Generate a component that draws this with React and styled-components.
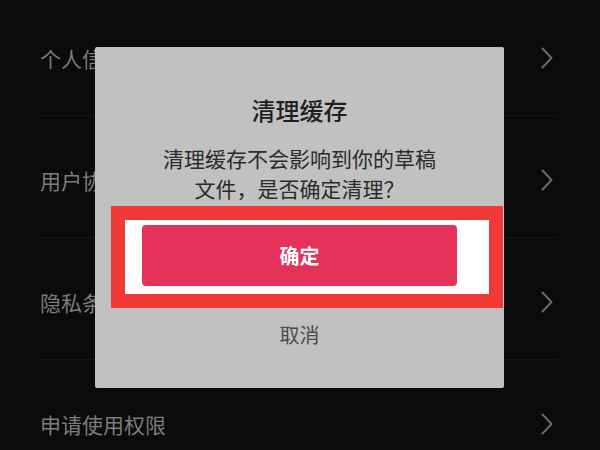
import React from "react";
import styled, { createGlobalStyle } from "styled-components";

const GlobalStyle = createGlobalStyle`
  html, body {
    margin: 0;
    padding: 0;
    background: #0b0b0b;
  }
  * {
    box-sizing: border-box;
  }
`;

const Screen = styled.div`
  position: relative;
  width: 600px;
  height: 450px;
  overflow: hidden;
  background: #0b0b0b;
  font-family: "Noto Sans CJK SC", "Noto Sans", sans-serif;
`;

const List = styled.div`
  display: flex;
  flex-direction: column;
`;

const Row = styled.div`
  display: flex;
  align-items: center;
  justify-content: space-between;
  height: ${(p) => (p.$first ? "115px" : "121px")};
  padding: ${(p) => (p.$first ? "0" : "7px")} 47px 0 40px;
`;

const Divider = styled.div`
  height: 1px;
  margin: 0 42px 0 40px;
  background: #161616;
`;

const Label = styled.span`
  font-size: 21px;
  line-height: 30px;
  color: #7c7c7c;
`;

const Chevron = () => (
  <svg width="12" height="22" viewBox="0 0 12 22" fill="none">
    <polyline
      points="1.5,1.5 10.5,11 1.5,20.5"
      stroke="#6b6b6b"
      strokeWidth="2"
      strokeLinecap="round"
      strokeLinejoin="round"
    />
  </svg>
);

const Dialog = styled.div`
  position: absolute;
  left: 95px;
  top: 47px;
  width: 409px;
  height: 341px;
  display: flex;
  flex-direction: column;
  align-items: center;
  padding-top: 48px;
  background: #c1c1c1;
  border-radius: 2px;
`;

const Title = styled.div`
  font-size: 24px;
  line-height: 30px;
  font-weight: 500;
  color: #1f1f1f;
`;

const Message = styled.p`
  margin: 18px 0 3px;
  font-size: 21px;
  line-height: 30px;
  color: #2c2c2c;
  text-align: center;
`;

const Highlight = styled.div`
  align-self: flex-start;
  margin-left: 16px;
  width: 392px;
  height: 102px;
  padding: 5px 32px 8px 17px;
  border: 14px solid #f13a37;
  background: #ffffff;
`;

const ConfirmButton = styled.button`
  width: 100%;
  height: 61px;
  border: none;
  border-radius: 4px;
  background: #e63259;
  color: #ffffff;
  font-family: inherit;
  font-size: 20px;
  font-weight: 700;
  cursor: pointer;
`;

const CancelButton = styled.button`
  margin-top: 12px;
  border: none;
  background: none;
  padding: 0;
  font-family: inherit;
  font-size: 20px;
  line-height: 30px;
  color: #4b4b4b;
  cursor: pointer;
`;

const items = ["个人信息收集清单", "用户协议", "隐私条款", "申请使用权限"];

const App = () => {
  return (
    <>
      <GlobalStyle />
      <Screen>
        <List>
          {items.map((label, i) => (
            <React.Fragment key={label}>
              {i > 0 && <Divider />}
              <Row $first={i === 0}>
                <Label>{label}</Label>
                <Chevron />
              </Row>
            </React.Fragment>
          ))}
        </List>

        <Dialog>
          <Title>清理缓存</Title>
          <Message>
            清理缓存不会影响到你的草稿
            <br />
            文件，是否确定清理？
          </Message>
          <Highlight>
            <ConfirmButton>确定</ConfirmButton>
          </Highlight>
          <CancelButton>取消</CancelButton>
        </Dialog>
      </Screen>
    </>
  );
};

export default App;
